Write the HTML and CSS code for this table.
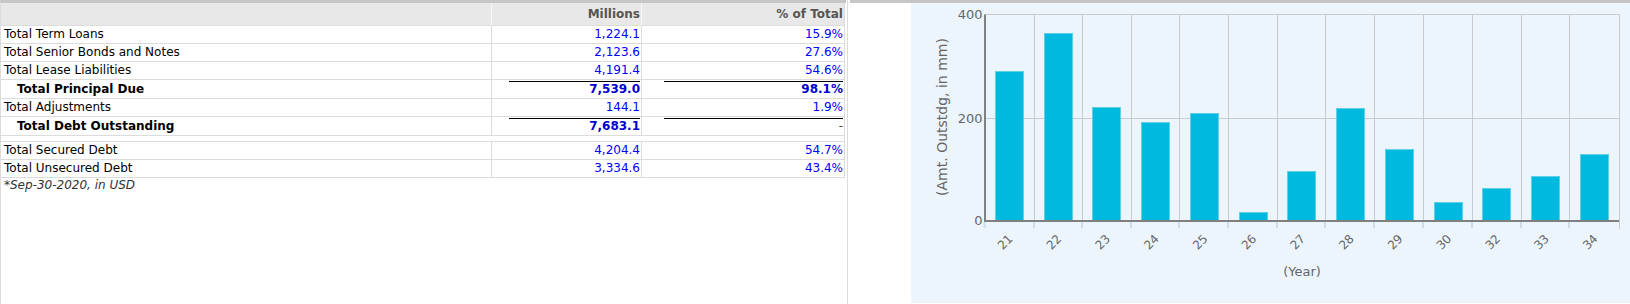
FILE: index.html
```html
<!DOCTYPE html>
<html lang="en">
<head>
<meta charset="utf-8">
<title>Debt Summary</title>
<link rel="stylesheet" href="styles.css">
</head>
<body>
<div class="page">
  <section class="debt">
    <table class="debt-table">
      <thead>
        <tr><th class="c-label"></th><th class="c-mil">Millions</th><th class="c-pct">% of Total</th></tr>
      </thead>
      <tbody>
        <tr><td class="label">Total Term Loans</td><td class="num">1,224.1</td><td class="num">15.9%</td></tr>
        <tr><td class="label">Total Senior Bonds and Notes</td><td class="num">2,123.6</td><td class="num">27.6%</td></tr>
        <tr><td class="label">Total Lease Liabilities</td><td class="num">4,191.4</td><td class="num">54.6%</td></tr>
        <tr class="total"><td class="label">Total Principal Due</td><td class="num"><div class="sum">7,539.0</div></td><td class="num"><div class="sum">98.1%</div></td></tr>
        <tr><td class="label">Total Adjustments</td><td class="num">144.1</td><td class="num">1.9%</td></tr>
        <tr class="total"><td class="label">Total Debt Outstanding</td><td class="num"><div class="sum">7,683.1</div></td><td class="num"><div class="sum dash">-</div></td></tr>
        <tr class="gap"><td colspan="3"><div class="gap-fill"></div></td></tr>
        <tr><td class="label">Total Secured Debt</td><td class="num">4,204.4</td><td class="num">54.7%</td></tr>
        <tr><td class="label">Total Unsecured Debt</td><td class="num">3,334.6</td><td class="num">43.4%</td></tr>
      </tbody>
    </table>
    <p class="note">*Sep-30-2020, in USD</p>
  </section>
  <div class="divider"></div>
  <section class="chart-panel">
    <div class="chart">
      <svg class="chart-svg" width="719" height="300" viewBox="0 0 719 300" xmlns="http://www.w3.org/2000/svg">
        <g class="grid">
          <line x1="74" y1="11.5" x2="708.5" y2="11.5"/>
          <line x1="74" y1="115.5" x2="708.5" y2="115.5"/>
          <line x1="123.5" y1="11.5" x2="123.5" y2="217"/>
          <line x1="171.5" y1="11.5" x2="171.5" y2="217"/>
          <line x1="220.5" y1="11.5" x2="220.5" y2="217"/>
          <line x1="268.5" y1="11.5" x2="268.5" y2="217"/>
          <line x1="317.5" y1="11.5" x2="317.5" y2="217"/>
          <line x1="366.5" y1="11.5" x2="366.5" y2="217"/>
          <line x1="414.5" y1="11.5" x2="414.5" y2="217"/>
          <line x1="463.5" y1="11.5" x2="463.5" y2="217"/>
          <line x1="512.5" y1="11.5" x2="512.5" y2="217"/>
          <line x1="561.5" y1="11.5" x2="561.5" y2="217"/>
          <line x1="610.5" y1="11.5" x2="610.5" y2="217"/>
          <line x1="658.5" y1="11.5" x2="658.5" y2="217"/>
          <line x1="708.5" y1="11.5" x2="708.5" y2="226"/>
        </g>
        <g class="ticks">
          <line x1="73.5" y1="219" x2="73.5" y2="225"/>
          <line x1="123" y1="219" x2="123" y2="225"/>
          <line x1="171" y1="219" x2="171" y2="225"/>
          <line x1="220" y1="219" x2="220" y2="225"/>
          <line x1="268" y1="219" x2="268" y2="225"/>
          <line x1="317" y1="219" x2="317" y2="225"/>
          <line x1="366" y1="219" x2="366" y2="225"/>
          <line x1="414" y1="219" x2="414" y2="225"/>
          <line x1="463" y1="219" x2="463" y2="225"/>
          <line x1="512" y1="219" x2="512" y2="225"/>
          <line x1="561" y1="219" x2="561" y2="225"/>
          <line x1="610" y1="219" x2="610" y2="225"/>
          <line x1="658" y1="219" x2="658" y2="225"/>
        </g>
        <g class="bars">
          <rect x="84.5" y="68.5" width="28" height="149"/>
          <rect x="133.5" y="30.5" width="28" height="187"/>
          <rect x="181.5" y="104.5" width="28" height="113"/>
          <rect x="230.5" y="119.5" width="28" height="98"/>
          <rect x="279.5" y="110.5" width="28" height="107"/>
          <rect x="328.5" y="209.5" width="28" height="8"/>
          <rect x="376.5" y="168.5" width="28" height="49"/>
          <rect x="425.5" y="105.5" width="28" height="112"/>
          <rect x="474.5" y="146.5" width="28" height="71"/>
          <rect x="523.5" y="199.5" width="28" height="18"/>
          <rect x="571.5" y="185.5" width="28" height="32"/>
          <rect x="620.5" y="173.5" width="28" height="44"/>
          <rect x="669.5" y="151.5" width="28" height="66"/>
        </g>
        <g class="axis">
          <line x1="74" y1="11.5" x2="74" y2="219"/>
          <line x1="73" y1="218" x2="708" y2="218"/>
        </g>
        <g class="ylabels">
          <text x="71.5" y="16">400</text>
          <text x="71.5" y="119.5">200</text>
          <text x="71.5" y="221.7">0</text>
        </g>
        <g class="xlabels">
          <text transform="translate(102.5 236.5) rotate(-45)">21</text>
          <text transform="translate(151.25 236.5) rotate(-45)">22</text>
          <text transform="translate(200 236.5) rotate(-45)">23</text>
          <text transform="translate(248.75 236.5) rotate(-45)">24</text>
          <text transform="translate(297.5 236.5) rotate(-45)">25</text>
          <text transform="translate(346.25 236.5) rotate(-45)">26</text>
          <text transform="translate(395 236.5) rotate(-45)">27</text>
          <text transform="translate(443.75 236.5) rotate(-45)">28</text>
          <text transform="translate(492.5 236.5) rotate(-45)">29</text>
          <text transform="translate(541.25 236.5) rotate(-45)">30</text>
          <text transform="translate(590 236.5) rotate(-45)">32</text>
          <text transform="translate(638.75 236.5) rotate(-45)">33</text>
          <text transform="translate(687.5 236.5) rotate(-45)">34</text>
        </g>
        <text class="ytitle" transform="translate(36 114) rotate(-90)">(Amt. Outstdg, in mm)</text>
        <text class="xtitle" x="391" y="273">(Year)</text>
      </svg>
    </div>
  </section>
</div>
</body>
</html>
```

FILE: styles.css
```css
html, body {
  margin: 0;
  padding: 0;
  background: #ffffff;
}

body {
  font-family: "DejaVu Sans", Verdana, sans-serif;
  font-size: 12px;
  color: #000;
}

.page {
  display: flex;
  height: 304px;
}

/* ---------- left: debt table ---------- */
.debt {
  width: 845px;
  border-top: 3px solid #c6c6c6;
  border-left: 1px solid #dcdcdc;
  margin-right: 1px;
}

.divider {
  width: 1px;
  background: #dcdcdc;
  margin-right: 2px;
}

.debt-table {
  width: 844px;
  table-layout: fixed;
  border-collapse: separate;
  border-spacing: 0;
}

.debt-table th,
.debt-table td {
  box-sizing: border-box;
  white-space: nowrap;
  border-right: 1px solid #dcdcdc;
  border-bottom: 1px solid #dcdcdc;
}

.debt-table th {
  background: #e8e8e8;
  color: #555;
  font-weight: bold;
  text-align: right;
  line-height: 21px;
  padding: 1px 1px 0 2px;
  border-right-color: #f7f7f7;
}

.debt-table th.c-pct {
  border-right-color: #dcdcdc;
}

.c-label { width: 491px; }
.c-mil { width: 150px; }
.c-pct { width: 203px; }

.debt-table td {
  line-height: 17px;
  padding: 0 1px 0 3px;
}

.debt-table td.num {
  text-align: right;
  color: #0000ff;
  padding: 0 1px 0 2px;
}

.debt-table tr.total td {
  line-height: 18px;
  font-weight: bold;
}

.debt-table tr.total td.label {
  padding-left: 16px;
}

.debt-table tr.total td.num {
  color: #0000d0;
}

.sum {
  width: 90%;
  margin: 1px 0 0 auto;
  border-top: 1px solid #000;
  line-height: 15px;
  padding-bottom: 1px;
}

.sum.dash {
  color: #444;
  font-weight: normal;
}

.debt-table tr.gap td {
  padding: 0;
  line-height: 0;
}

.gap-fill {
  height: 5px;
}

.note {
  margin: 0;
  padding-left: 3px;
  font-style: italic;
  line-height: 15px;
  color: #333;
}

/* ---------- right: chart ---------- */
.chart-panel {
  flex: 1;
  border-top: 3px solid #c6c6c6;
  padding-left: 61px;
}

.chart {
  height: 300px;
  background: #edf5fc;
}

.chart-svg {
  display: block;
  font-family: "DejaVu Sans", Verdana, sans-serif;
}

.grid line {
  stroke: #c9cccf;
  stroke-width: 1;
}

.ticks line {
  stroke: #cfdbe9;
  stroke-width: 2;
}

.bars rect {
  fill: #00b9df;
  stroke: #5dd0ea;
  stroke-width: 1;
}

.axis line {
  stroke: #808080;
  stroke-width: 2;
}

.ylabels text {
  font-size: 13px;
  fill: #666;
  text-anchor: end;
}

.xlabels text {
  font-size: 12px;
  fill: #666;
  text-anchor: end;
}

.ytitle {
  font-size: 14px;
  fill: #666;
  text-anchor: middle;
}

.xtitle {
  font-size: 13px;
  fill: #666;
  text-anchor: middle;
}
```
